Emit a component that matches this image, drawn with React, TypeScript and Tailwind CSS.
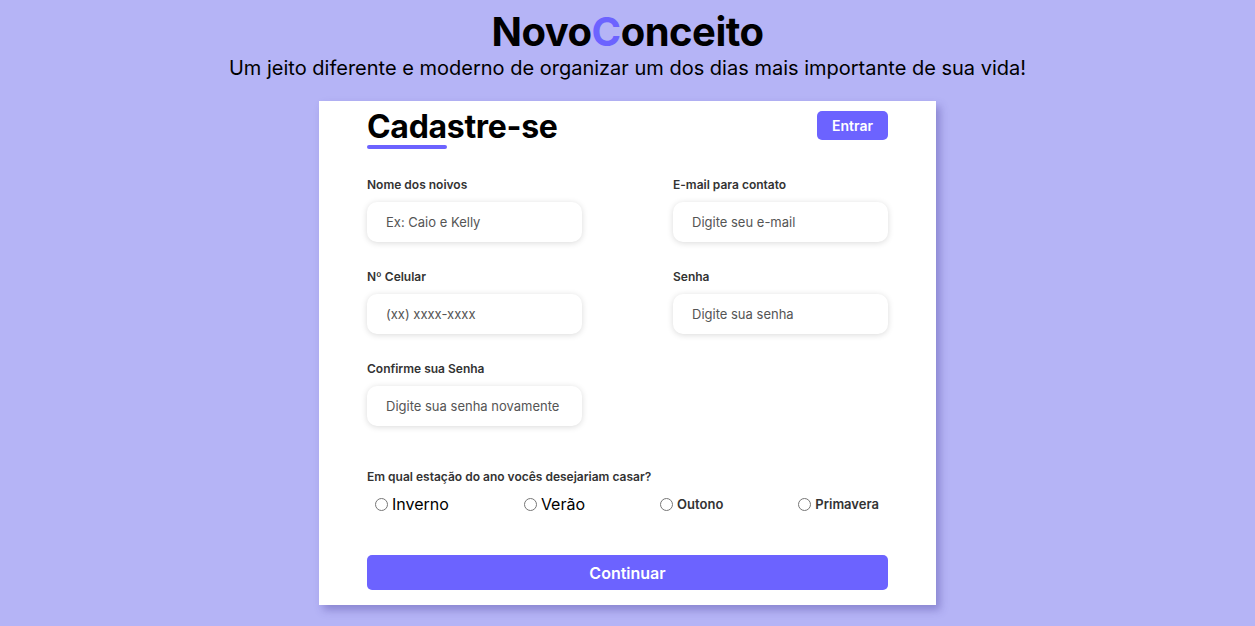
import { useState } from "react"

const fields = [
  [
    { id: "nome", label: "Nome dos noivos", placeholder: "Ex: Caio e Kelly", type: "text" },
    { id: "email", label: "E-mail para contato", placeholder: "Digite seu e-mail", type: "email" },
  ],
  [
    { id: "celular", label: "Nº Celular", placeholder: "(xx) xxxx-xxxx", type: "tel" },
    { id: "senha", label: "Senha", placeholder: "Digite sua senha", type: "password" },
  ],
  [{ id: "confirma", label: "Confirme sua Senha", placeholder: "Digite sua senha novamente", type: "password" }],
]

const estacoes = [
  { id: "inverno", label: "Inverno", big: true },
  { id: "verao", label: "Verão", big: true },
  { id: "outono", label: "Outono", big: false },
  { id: "primavera", label: "Primavera", big: false },
]

const Field = ({ id, label, placeholder, type }: { id: string; label: string; placeholder: string; type: string }) => (
  <div className="flex w-[215px] flex-col">
    <label htmlFor={id} className="text-[12px] font-semibold leading-[15px] text-[#333]">
      {label}
    </label>
    <input
      id={id}
      type={type}
      placeholder={placeholder}
      className="mt-[10px] h-[40px] w-full rounded-[10px] bg-white px-[19px] text-[13px] text-[#333] shadow-[0_1px_6px_rgba(0,0,0,0.15)] outline-none placeholder:text-[#555]"
    />
  </div>
)

export default function App() {
  const [estacao, setEstacao] = useState("")

  return (
    <div
      className="flex min-h-[626px] flex-col items-center bg-[#b5b4f6] pt-2 text-black"
      style={{ fontFamily: "Inter, 'Noto Sans', sans-serif" }}
    >
      <h1 className="text-[40px] font-bold leading-[48px] tracking-[-0.5px]">
        Novo<span className="text-[#6c63ff]">C</span>onceito
      </h1>
      <p className="text-[20px] leading-6">Um jeito diferente e moderno de organizar um dos dias mais importante de sua vida!</p>

      {/* Card */}
      <div className="mt-[21px] w-[617px] bg-white pl-12 pr-[48px] pt-[6px] pb-[15px] shadow-[4px_5px_8px_rgba(60,50,140,0.35)]">
        <div className="flex items-start justify-between">
          <div>
            <h2 className="text-[32px] font-bold leading-[40px] tracking-[-0.3px]">Cadastre-se</h2>
            <div className="mt-[-2px] h-[4px] w-[80px] rounded-full bg-[#6c63ff]" />
          </div>
          <button className="mt-[4px] h-[29px] w-[71px] rounded-[5px] bg-[#6c63ff] text-[14px] font-semibold text-white">
            Entrar
          </button>
        </div>

        <div className="mt-[28px] flex flex-col gap-[27px]">
          {fields.map((row, i) => (
            <div key={i} className="flex justify-between">
              {row.map((f) => (
                <Field key={f.id} {...f} />
              ))}
            </div>
          ))}
        </div>

        <p className="mt-[43px] text-[12px] font-semibold leading-[15px] text-[#333]">
          Em qual estação do ano vocês desejariam casar?
        </p>
        <div className="mt-[10px] flex justify-between pl-2 pr-[9px]">
          {estacoes.map((e) => (
            <label key={e.id} className="flex items-center gap-[4px]">
              <input
                type="radio"
                name="estacao"
                checked={estacao === e.id}
                onChange={() => setEstacao(e.id)}
                className="m-0 h-[13px] w-[13px]"
              />
              <span className={e.big ? "text-[16px] leading-5" : "text-[13px] font-semibold leading-5 text-[#333]"}>
                {e.label}
              </span>
            </label>
          ))}
        </div>

        <button className="mt-[41px] h-[35px] w-full rounded-[5px] bg-[#6c63ff] text-[16px] font-semibold text-white">
          Continuar
        </button>
      </div>
    </div>
  )
}
